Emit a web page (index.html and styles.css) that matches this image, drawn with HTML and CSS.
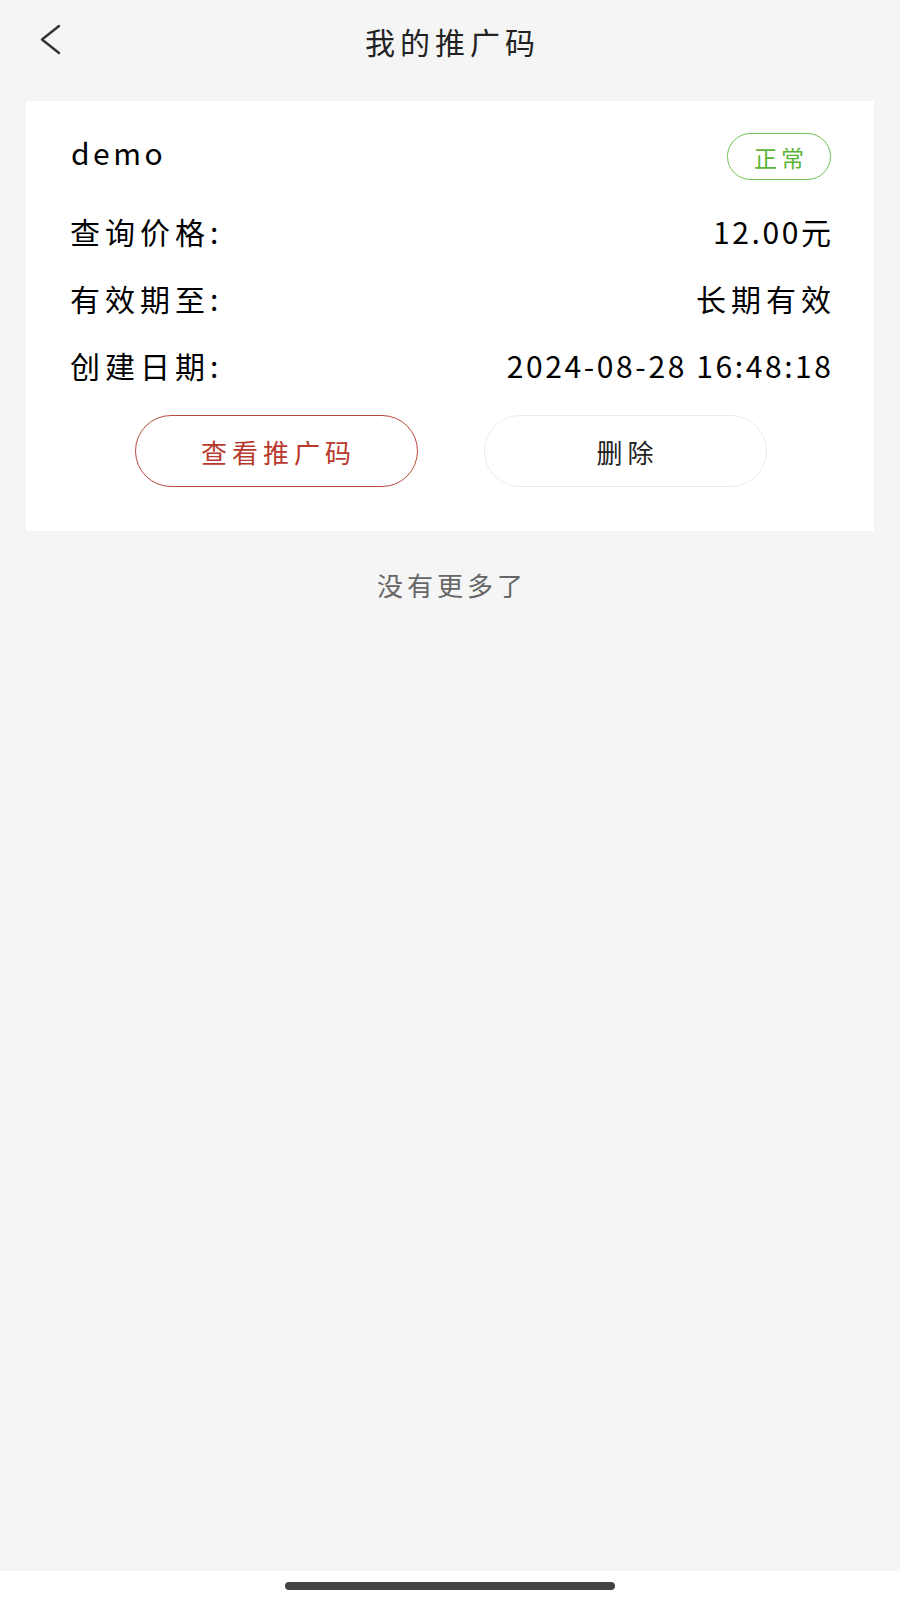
FILE: index.html
```html
<!DOCTYPE html>
<html lang="zh-CN">
<head>
<meta charset="utf-8">
<title>我的推广码</title>
<link rel="stylesheet" href="styles.css">
</head>
<body>
<div class="page">
  <header class="topbar">
    <div class="back">
      <svg width="24" height="32" viewBox="0 0 24 32" aria-hidden="true">
        <polyline points="20,2 3,15.5 20,29" fill="none" stroke="#333" stroke-width="2.4" stroke-linecap="round" stroke-linejoin="round"/>
      </svg>
    </div>
    <h1 class="title">我的推广码</h1>
    <div class="spacer"></div>
  </header>

  <main class="content">
    <section class="card">
      <div class="card-head">
        <span class="name">demo</span>
        <span class="badge">正常</span>
      </div>
      <div class="row">
        <span class="label">查询价格:</span>
        <span class="value num">12.00元</span>
      </div>
      <div class="row">
        <span class="label">有效期至:</span>
        <span class="value">长期有效</span>
      </div>
      <div class="row">
        <span class="label">创建日期:</span>
        <span class="value num">2024-08-28 16:48:18</span>
      </div>
      <div class="actions">
        <button class="btn btn-primary">查看推广码</button>
        <button class="btn btn-plain">删除</button>
      </div>
    </section>
    <p class="no-more">没有更多了</p>
  </main>

  <footer class="home-strip">
    <div class="home-indicator"></div>
  </footer>
</div>
</body>
</html>
```

FILE: styles.css
```css
* { box-sizing: border-box; }

html, body {
  margin: 0;
  padding: 0;
}

body {
  background: #f5f5f5;
  font-family: "Noto Sans CJK SC", "Noto Sans", sans-serif;
  font-weight: 400;
  color: #000;
}

.page {
  min-height: 1600px;
  display: flex;
  flex-direction: column;
}

.topbar {
  height: 84px;
  display: grid;
  grid-template-columns: 1fr auto 1fr;
  align-items: center;
}

.back {
  padding-left: 39px;
  display: flex;
  align-items: center;
  padding-bottom: 4px;
}

.title {
  margin: 0 0 3px;
  font-size: 30px;
  font-weight: 400;
  letter-spacing: 5px;
  margin-right: -5px;
  color: #222;
}

.content {
  flex: 1;
}

.card {
  margin: 17px 26px 0;
  background: #fff;
  padding: 32px 43px 44px 44px;
}

.card-head {
  display: flex;
  justify-content: space-between;
  align-items: center;
  height: 47px;
  margin-bottom: 17px;
}

.name {
  font-size: 30px;
  letter-spacing: 3.5px;
  color: #000;
  margin-top: -10px;
  margin-left: 1px;
}

.badge {
  width: 104px;
  height: 47px;
  border: 1.5px solid #72c04f;
  border-radius: 24px;
  display: flex;
  align-items: center;
  justify-content: center;
  font-size: 23px;
  letter-spacing: 4px;
  padding-left: 4px;
  color: #5cb336;
}

.row {
  height: 67px;
  display: flex;
  justify-content: space-between;
  align-items: center;
  font-size: 30px;
  color: #000;
}

.label {
  letter-spacing: 5px;
}

.value {
  letter-spacing: 5px;
  margin-right: -5px;
}

.value.num {
  letter-spacing: 2.6px;
  margin-right: -2.6px;
}

.actions {
  display: flex;
  justify-content: center;
  gap: 66px;
  margin-top: 17px;
}

.btn {
  width: 283px;
  height: 72px;
  border-radius: 36px;
  background: #fff;
  font-family: inherit;
  font-weight: 400;
  font-size: 26px;
  letter-spacing: 5px;
  padding: 0 0 0 5px;
  cursor: pointer;
}

.btn-primary {
  border: 1.5px solid #b9493d;
  color: #b8392d;
}

.btn-plain {
  border: 1.5px solid #ebebeb;
  color: #222;
}

.no-more {
  margin: 0;
  padding-top: 36px;
  line-height: 36px;
  text-align: center;
  font-size: 26px;
  letter-spacing: 4px;
  padding-left: 4px;
  color: #666;
}

.home-strip {
  height: 29px;
  background: #fff;
  display: flex;
  justify-content: center;
  padding-top: 11px;
}

.home-indicator {
  width: 330px;
  height: 8px;
  border-radius: 4px;
  background: #444;
}
```
